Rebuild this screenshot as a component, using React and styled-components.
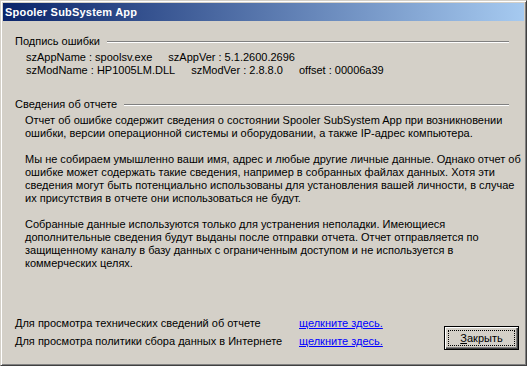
import React from 'react';
import styled, { createGlobalStyle } from 'styled-components';

const GlobalStyle = createGlobalStyle`
  html, body {
    margin: 0;
    padding: 0;
    background: #d4d0c8;
  }
  * {
    box-sizing: border-box;
  }
`;

const FONT = 'Tahoma, "Liberation Sans", Arial, sans-serif';

const Window = styled.div`
  width: 527px;
  height: 366px;
  display: flex;
  flex-direction: column;
  padding: 1px;
  background: #d4d0c8;
  border: 1px solid;
  border-color: #d4d0c8 #404040 #404040 #d4d0c8;
  box-shadow: inset 1px 1px #ffffff, inset -1px -1px #808080;
  font-family: ${FONT};
  font-size: 11px;
  color: #000;
`;

const TitleBar = styled.div`
  margin: 1px 1px 0 1px;
  height: 18px;
  display: flex;
  align-items: center;
  padding-left: 2px;
  background: linear-gradient(to right, #0a246a, #a6caf0);
  color: #fff;
  font-weight: bold;
  font-size: 11px;
  letter-spacing: 0.2px;
  white-space: nowrap;
`;

const Body = styled.div`
  flex: 1;
  display: flex;
  flex-direction: column;
  padding: 14px 6px 14px 13px;
`;

const Content = styled.div`
  flex: 1;
  padding-right: 10px;
`;

const GroupHeader = styled.div`
  display: flex;
  align-items: center;
  height: 13px;
  line-height: 13px;
  white-space: nowrap;
`;

const GroupLine = styled.div`
  flex: 1;
  margin-left: 7px;
  border-top: 1px solid #808080;
  border-bottom: 1px solid #ffffff;
`;

const Signature = styled.div`
  margin: 3px 0 21px 0;
  padding-left: 11px;
  line-height: 13px;
`;

const SigRow = styled.div`
  display: flex;
  gap: 16px;
  white-space: nowrap;
`;

const Paragraph = styled.p`
  margin: ${({ $first }) => ($first ? '3px' : '13px')} 0 0 0;
  padding-left: 10px;
  line-height: 13px;
  white-space: nowrap;
`;

const Footer = styled.div`
  display: flex;
  justify-content: space-between;
  align-items: flex-end;
`;

const Links = styled.div`
  display: grid;
  grid-template-columns: 284px auto;
  row-gap: 5px;
  line-height: 13px;
  padding-bottom: 2px;
  white-space: nowrap;
`;

const Link = styled.a`
  color: #0000ff;
  text-decoration: underline;
  cursor: pointer;
`;

const Button = styled.button`
  width: 75px;
  height: 24px;
  padding: 3px;
  background: #d4d0c8;
  border: 1px solid #000;
  box-shadow: inset 1px 1px #ffffff, inset -1px -1px #404040,
    inset -2px -2px #808080;
  font-family: ${FONT};
  font-size: 11px;
  color: #000;
  display: flex;
`;

const FocusRing = styled.span`
  flex: 1;
  display: flex;
  align-items: center;
  justify-content: center;
  border: 1px dotted #000;
`;

const Mnemonic = styled.span`
  text-decoration: underline;
`;

export default function App() {
  return (
    <>
      <GlobalStyle />
      <Window>
        <TitleBar>Spooler SubSystem App</TitleBar>
        <Body>
          <Content>
            <GroupHeader>
              Подпись ошибки
              <GroupLine />
            </GroupHeader>
            <Signature>
              <SigRow>
                <span>szAppName : spoolsv.exe</span>
                <span>szAppVer : 5.1.2600.2696</span>
              </SigRow>
              <SigRow>
                <span>szModName : HP1005LM.DLL</span>
                <span>szModVer : 2.8.8.0</span>
                <span>offset : 00006a39</span>
              </SigRow>
            </Signature>
            <GroupHeader>
              Сведения об отчете
              <GroupLine />
            </GroupHeader>
            <Paragraph $first>
              Отчет об ошибке содержит сведения о состоянии Spooler SubSystem App при возникновении
              <br />
              ошибки, версии операционной системы и оборудовании, а также IP-адрес компьютера.
            </Paragraph>
            <Paragraph>
              Мы не собираем умышленно ваши имя, адрес и любые другие личные данные. Однако отчет об
              <br />
              ошибке может содержать такие сведения, например в собранных файлах данных. Хотя эти
              <br />
              сведения могут быть потенциально использованы для установления вашей личности, в случае
              <br />
              их присутствия в отчете они использоваться не будут.
            </Paragraph>
            <Paragraph>
              Собранные данные используются только для устранения неполадки. Имеющиеся
              <br />
              дополнительные сведения будут выданы после отправки отчета. Отчет отправляется по
              <br />
              защищенному каналу в базу данных с ограниченным доступом и не используется в
              <br />
              коммерческих целях.
            </Paragraph>
          </Content>
          <Footer>
            <Links>
              <span>Для просмотра технических сведений об отчете</span>
              <Link>щелкните здесь.</Link>
              <span>Для просмотра политики сбора данных в Интернете</span>
              <Link>щелкните здесь.</Link>
            </Links>
            <Button>
              <FocusRing>
                <Mnemonic>З</Mnemonic>акрыть
              </FocusRing>
            </Button>
          </Footer>
        </Body>
      </Window>
    </>
  );
}
